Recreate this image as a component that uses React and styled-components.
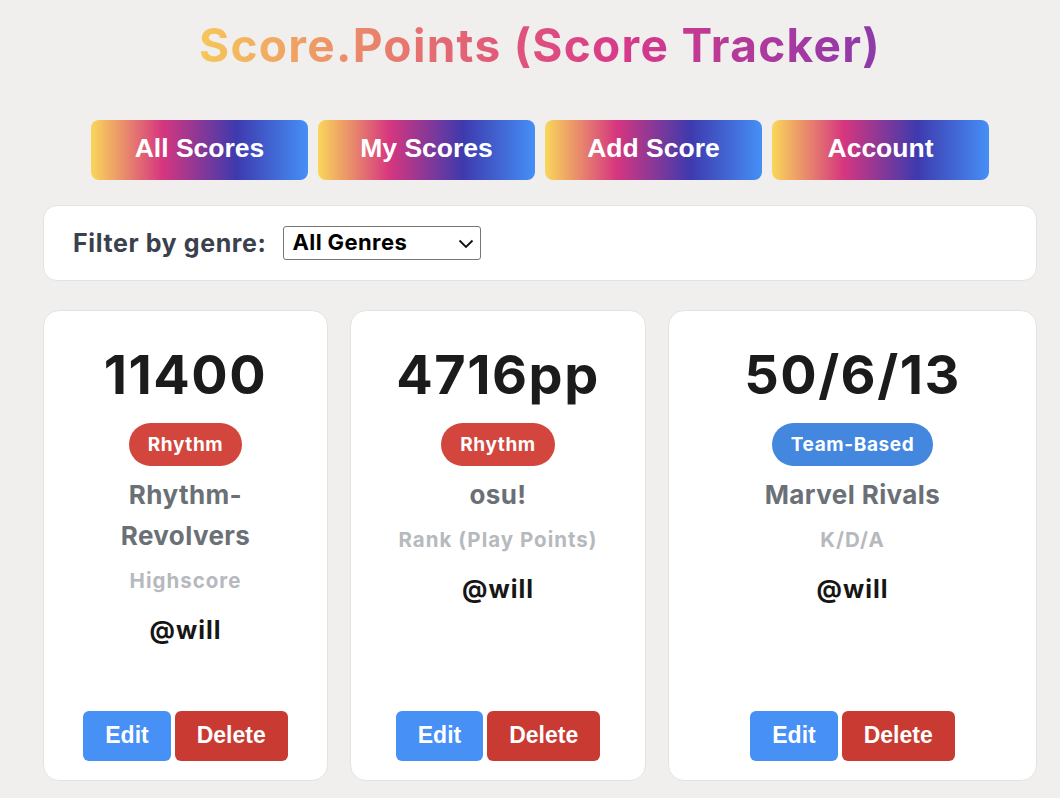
import React from 'react';
import styled, { createGlobalStyle } from 'styled-components';

const GlobalStyle = createGlobalStyle`
	* {
		box-sizing: border-box;
	}
	body {
		margin: 0;
		background: #f0efee;
		font-family: Inter, 'Liberation Sans', sans-serif;
	}
`;

const scores = [
	{ id: 1, value: '11400', genre: 'Rhythm', game: 'Rhythm-Revolvers', metric: 'Highscore', user: '@will' },
	{ id: 2, value: '4716pp', genre: 'Rhythm', game: 'osu!', metric: 'Rank (Play Points)', user: '@will' },
	{ id: 3, value: '50/6/13', genre: 'Team-Based', game: 'Marvel Rivals', metric: 'K/D/A', user: '@will' },
];

const genreColors = {
	Rhythm: '#d2463e',
	'Team-Based': '#4387df',
};

const App = () => {
	return (
		<>
			<GlobalStyle />
			<StylePage>
				<StyleTitle>Score.Points (Score Tracker)</StyleTitle>
				<StyleNav>
					<NavButton>All Scores</NavButton>
					<NavButton>My Scores</NavButton>
					<NavButton>Add Score</NavButton>
					<NavButton>Account</NavButton>
				</StyleNav>
				<StyleFilter>
					<label htmlFor='genre'>Filter by genre:</label>
					<StyleSelect>
						<select id='genre' defaultValue='all'>
							<option value='all'>All Genres</option>
							<option value='rhythm'>Rhythm</option>
							<option value='team'>Team-Based</option>
						</select>
						<svg width='16' height='10' viewBox='0 0 16 10' fill='none'>
							<path d='M1.5 1.5 L8 8 L14.5 1.5' stroke='#111' strokeWidth='1.8' />
						</svg>
					</StyleSelect>
				</StyleFilter>
				<StyleGrid>
					{scores.map((score) => (
						<StyleCard key={score.id}>
							<h2>{score.value}</h2>
							<Badge color={genreColors[score.genre]}>{score.genre}</Badge>
							<h3>{score.game}</h3>
							<p className='metric'>{score.metric}</p>
							<p className='user'>{score.user}</p>
							<StyleActions>
								<ActionButton $variant='edit'>Edit</ActionButton>
								<ActionButton $variant='delete'>Delete</ActionButton>
							</StyleActions>
						</StyleCard>
					))}
				</StyleGrid>
			</StylePage>
		</>
	);
};

const StylePage = styled.div`
	padding: 14px 23px 18px 43px;
`;

const StyleTitle = styled.h1`
	margin: 0 auto;
	width: fit-content;
	text-align: center;
	font-size: 46px;
	line-height: 62px;
	font-weight: 700;
	letter-spacing: 1.3px;
	background: linear-gradient(90deg, #f6c75a 0%, #e46a72 35%, #d8398a 62%, #8b3aab 100%);
	-webkit-background-clip: text;
	background-clip: text;
	color: transparent;
`;

const StyleNav = styled.nav`
	display: flex;
	justify-content: center;
	gap: 10px;
	margin-top: 44px;
`;

const NavButton = styled.button`
	width: 217px;
	height: 60px;
	padding: 0 0 4px;
	border: none;
	border-radius: 8px;
	background: linear-gradient(90deg, #f9d75a 0%, #d6367f 33%, #3e3aae 67%, #458ff6 100%);
	color: white;
	font-family: 'Liberation Sans', Arial, sans-serif;
	font-weight: 700;
	font-size: 26.5px;
	cursor: pointer;
`;

const StyleFilter = styled.div`
	margin-top: 25px;
	height: 76px;
	display: flex;
	align-items: center;
	gap: 17px;
	padding: 0 29px;
	background: white;
	border: 1px solid #e3e3e3;
	border-radius: 14px;
	label {
		font-size: 25px;
		font-weight: 700;
		letter-spacing: 0.6px;
		color: #3a404c;
	}
`;

const StyleSelect = styled.div`
	position: relative;
	select {
		appearance: none;
		width: 198px;
		height: 34px;
		padding: 0 6px 2px 8px;
		border: 1px solid #767676;
		border-radius: 3px;
		background: white;
		font-family: Inter, sans-serif;
		font-size: 22px;
		font-weight: 700;
		letter-spacing: 0.4px;
		color: #000;
	}
	svg {
		position: absolute;
		right: 7px;
		top: 13px;
		pointer-events: none;
	}
`;

const StyleGrid = styled.div`
	display: grid;
	grid-template-columns: 285px 296px 369px;
	gap: 22px;
	margin-top: 29px;
`;

const StyleCard = styled.div`
	height: 471px;
	display: flex;
	flex-direction: column;
	align-items: center;
	text-align: center;
	padding: 33px 40px 19px;
	background: white;
	border: 1px solid #e3e3e3;
	border-radius: 16px;
	h2 {
		margin: 0;
		font-size: 54px;
		line-height: 62px;
		font-weight: 700;
		letter-spacing: 1.5px;
		color: #1b1b1b;
	}
	h3 {
		margin: 8px 0 0;
		font-size: 26px;
		line-height: 41px;
		font-weight: 700;
		letter-spacing: 0.4px;
		color: #6b7077;
	}
	.metric {
		margin: 10px 0 0;
		font-size: 20.5px;
		line-height: 30px;
		font-weight: 700;
		letter-spacing: 1px;
		color: #b6b9bd;
	}
	.user {
		margin: 17px 0 0;
		font-size: 25px;
		line-height: 34px;
		font-weight: 700;
		letter-spacing: 1px;
		color: #161616;
	}
`;

const Badge = styled.span`
	margin-top: 17px;
	height: 43px;
	display: inline-flex;
	align-items: center;
	padding: 0 19px;
	border-radius: 22px;
	background: ${(props) => props.color};
	color: white;
	font-size: 19px;
	font-weight: 700;
	letter-spacing: 0.6px;
`;

const StyleActions = styled.div`
	margin-top: auto;
	display: flex;
	gap: 4px;
`;

const ActionButton = styled.button`
	height: 50px;
	padding: 0 22px 2px;
	border: none;
	border-radius: 6px;
	background: ${(props) => (props.$variant === 'edit' ? '#4690f6' : '#c93b32')};
	color: white;
	font-family: 'Liberation Sans', Arial, sans-serif;
	font-weight: 700;
	font-size: 23px;
	cursor: pointer;
`;

export default App;
